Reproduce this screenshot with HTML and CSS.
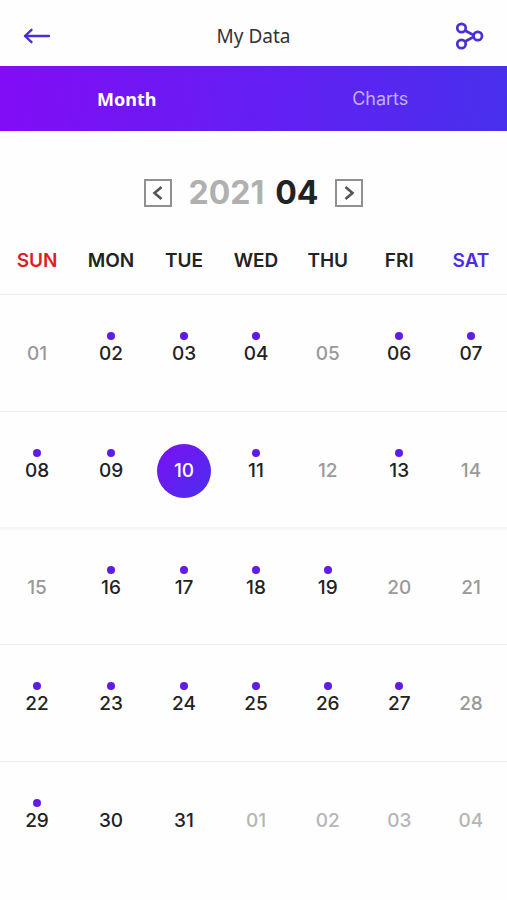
FILE: index.html
```html
<!DOCTYPE html>
<html lang="en">
<head>
<meta charset="utf-8">
<meta name="viewport" content="width=device-width, initial-scale=1">
<title>My Data</title>
<link rel="stylesheet" href="styles.css">
</head>
<body>
<header class="topbar">
  <button class="icon-button" type="button" aria-label="Back">
    <svg width="28" height="28" viewBox="0 0 28 28" fill="none" stroke="#4a30d4" stroke-width="2.4" stroke-linecap="round" stroke-linejoin="round"><path d="M26 14H2M8.500 7.800L2 14l6.500 6.200"/></svg>
  </button>
  <h1 class="title">My Data</h1>
  <button class="icon-button" type="button" aria-label="Share">
    <svg width="28" height="28" viewBox="0 0 28 28" fill="none" stroke="#4a30d4" stroke-width="2.700"><circle cx="5.500" cy="6" r="4.200"/><circle cx="5.500" cy="22" r="4.200"/><circle cx="21.800" cy="14" r="4.200"/><path d="M9 8.500l9.300 5M9 19.500l9.300-5"/></svg>
  </button>
</header>
<nav class="tabs">
  <a class="tab tab-active" href="#month" aria-current="page">Month</a>
  <a class="tab" href="#charts">Charts</a>
</nav>
<main id="month">
  <div class="month-picker">
    <button class="step" type="button" aria-label="Previous month"><svg width="24" height="24" viewBox="0 0 24 24" fill="none" stroke="#555" stroke-width="2.600"><path d="M15.500 6l-7 6 7 6"/></svg></button>
    <h2 class="month"><span class="year">2021</span> <span>04</span></h2>
    <button class="step" type="button" aria-label="Next month"><svg width="24" height="24" viewBox="0 0 24 24" fill="none" stroke="#555" stroke-width="2.600"><path d="M8.500 6l7 6-7 6"/></svg></button>
  </div>
  <table class="calendar">
    <colgroup><col class="col-wide"><col class="col-wide"><col class="col-mid"><col class="col-base"><col class="col-slim"><col class="col-slim"><col class="col-base"></colgroup>
    <thead>
      <tr><th class="sunday" scope="col">SUN</th><th scope="col">MON</th><th scope="col">TUE</th><th scope="col">WED</th><th scope="col">THU</th><th scope="col">FRI</th><th class="saturday" scope="col">SAT</th></tr>
    </thead>
    <tbody>
      <tr><td><button class="day empty" type="button">01</button></td><td><button class="day marked" type="button">02</button></td><td><button class="day marked" type="button">03</button></td><td><button class="day marked" type="button">04</button></td><td><button class="day empty" type="button">05</button></td><td><button class="day marked" type="button">06</button></td><td><button class="day marked" type="button">07</button></td></tr>
      <tr class="short"><td><button class="day marked" type="button">08</button></td><td><button class="day marked" type="button">09</button></td><td><button class="day selected" type="button">10</button></td><td><button class="day marked" type="button">11</button></td><td><button class="day empty" type="button">12</button></td><td><button class="day marked" type="button">13</button></td><td><button class="day empty" type="button">14</button></td></tr>
      <tr class="soft-rule"><td><button class="day empty" type="button">15</button></td><td><button class="day marked" type="button">16</button></td><td><button class="day marked" type="button">17</button></td><td><button class="day marked" type="button">18</button></td><td><button class="day marked" type="button">19</button></td><td><button class="day empty" type="button">20</button></td><td><button class="day empty" type="button">21</button></td></tr>
      <tr><td><button class="day marked" type="button">22</button></td><td><button class="day marked" type="button">23</button></td><td><button class="day marked" type="button">24</button></td><td><button class="day marked" type="button">25</button></td><td><button class="day marked" type="button">26</button></td><td><button class="day marked" type="button">27</button></td><td><button class="day empty" type="button">28</button></td></tr>
      <tr><td><button class="day marked" type="button">29</button></td><td><button class="day" type="button">30</button></td><td><button class="day" type="button">31</button></td><td><button class="day outside" type="button">01</button></td><td><button class="day outside" type="button">02</button></td><td><button class="day outside" type="button">03</button></td><td><button class="day outside" type="button">04</button></td></tr>
    </tbody>
  </table>
</main>
</body>
</html>
```

FILE: styles.css
```css
* {
  box-sizing: border-box;
}

body {
  margin: 0;
  background: #fefefe;
  color: #222;
  font-family: Inter, "Liberation Sans", sans-serif;
}

button {
  padding: 0;
  border: 0;
  background: none;
  color: inherit;
  font: inherit;
  cursor: pointer;
}

svg {
  display: block;
}

.topbar {
  display: flex;
  align-items: center;
  justify-content: space-between;
  height: 66px;
  padding: 6px 23px 0;
}

.title {
  margin: 0;
  color: #333;
  font: 400 19px/24px "Noto Sans", sans-serif;
}

.tabs {
  display: grid;
  grid-template-columns: 1fr 1fr;
  height: 65px;
  background: linear-gradient(100deg, #820cf6, #4830ee);
}

.tab {
  display: flex;
  align-items: center;
  justify-content: center;
  color: #c4b0fa;
  font-size: 18px;
  text-decoration: none;
}

.tab-active {
  color: #fff;
  font-family: "Noto Sans", sans-serif;
  font-weight: 700;
}

.month-picker {
  display: flex;
  align-items: center;
  justify-content: center;
  gap: 17px;
  padding-top: 42px;
}

.step {
  display: grid;
  place-items: center;
  width: 28px;
  height: 28px;
  border: 2px solid #909090;
}

.month {
  display: flex;
  gap: 11px;
  margin: 0;
  font-size: 32px;
  font-weight: 700;
  line-height: 40px;
}

.year {
  color: #b0b0b0;
}

.calendar {
  width: 100%;
  border-collapse: separate;
  border-spacing: 0;
  table-layout: fixed;
}

.col-wide {
  width: 14.6%;
}

.col-mid {
  width: 14.2%;
}

.col-base {
  width: 14.2%;
}

.col-slim {
  width: 14.1%;
}

th {
  height: 81px;
  padding: 14px 0 0;
  font-size: 19px;
  font-weight: 600;
  line-height: 24px;
}

.sunday {
  color: #dc1f24;
}

.saturday {
  color: #4c2de2;
}

td {
  height: 117px;
  padding: 2px 0 0;
  border-top: 1px solid #ececec;
  text-align: center;
}

.short td {
  height: 116px;
}

.soft-rule td {
  border-top: 3px solid #f7f7f7;
}

.day {
  position: relative;
  width: 54px;
  height: 54px;
  border-radius: 50%;
  font-size: 19px;
  font-weight: 450;
  line-height: 54px;
}

.empty {
  color: #999;
}

.outside {
  color: #b5b5b5;
}

.selected {
  background: linear-gradient(135deg, #7c10f4, #4a2eee);
  color: #fff;
}

.marked::before {
  content: "";
  position: absolute;
  top: 5px;
  left: 23px;
  width: 8px;
  height: 8px;
  border-radius: 50%;
  background: #601be6;
}
```
